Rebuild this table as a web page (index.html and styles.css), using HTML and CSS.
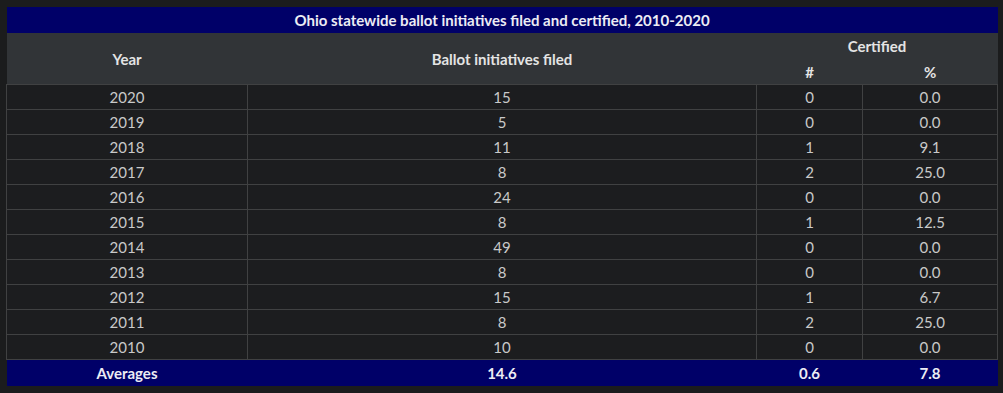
FILE: index.html
```html
<!DOCTYPE html>
<html>
<head>
<meta charset="utf-8">
<link rel="stylesheet" href="styles.css">
</head>
<body>
<div class="wrap">
<table class="data">
  <colgroup>
    <col class="c-year"><col class="c-filed"><col class="c-num"><col class="c-pct">
  </colgroup>
  <thead>
    <tr class="title-row"><th colspan="4">Ohio statewide ballot initiatives filed and certified, 2010-2020</th></tr>
    <tr class="head-row">
      <th rowspan="2">Year</th>
      <th rowspan="2">Ballot initiatives filed</th>
      <th colspan="2">Certified</th>
    </tr>
    <tr class="head-row sub"><th>#</th><th>%</th></tr>
  </thead>
  <tbody>
    <tr><td>2020</td><td>15</td><td>0</td><td>0.0</td></tr>
    <tr><td>2019</td><td>5</td><td>0</td><td>0.0</td></tr>
    <tr><td>2018</td><td>11</td><td>1</td><td>9.1</td></tr>
    <tr><td>2017</td><td>8</td><td>2</td><td>25.0</td></tr>
    <tr><td>2016</td><td>24</td><td>0</td><td>0.0</td></tr>
    <tr><td>2015</td><td>8</td><td>1</td><td>12.5</td></tr>
    <tr><td>2014</td><td>49</td><td>0</td><td>0.0</td></tr>
    <tr><td>2013</td><td>8</td><td>0</td><td>0.0</td></tr>
    <tr><td>2012</td><td>15</td><td>1</td><td>6.7</td></tr>
    <tr><td>2011</td><td>8</td><td>2</td><td>25.0</td></tr>
    <tr><td>2010</td><td>10</td><td>0</td><td>0.0</td></tr>
  </tbody>
  <tfoot>
    <tr class="avg-row"><td>Averages</td><td>14.6</td><td>0.6</td><td>7.8</td></tr>
  </tfoot>
</table>
</div>
</body>
</html>
```
FILE: styles.css
```css
html, body {
  margin: 0;
  padding: 0;
  background: #1b1c1d;
}
.wrap {
  padding: 7px 6px;
}
.data {
  width: 991px;
  border-collapse: collapse;
  table-layout: fixed;
  font-family: Lato, "Liberation Sans", sans-serif;
  text-align: center;
}
.c-year { width: 241px; }
.c-filed { width: 509px; }
.c-num { width: 106px; }
.c-pct { width: 135px; }
.title-row th {
  background: #000068;
  color: #ececf4;
  font-size: 15px;
  font-weight: 700;
  height: 26px;
  padding: 0;
}
.head-row th {
  background: #313437;
  color: #e4e4e4;
  font-size: 15px;
  font-weight: 700;
  height: 26px;
  padding: 0;
}
.head-row.sub th {
  height: 25px;
}
tbody td {
  background: #1c1d1f;
  color: #c9c9c9;
  font-size: 15px;
  height: 24px;
  padding: 0;
  border: 1px solid #404142;
}
.avg-row td {
  background: #000068;
  color: #ececf4;
  font-size: 15px;
  font-weight: 700;
  height: 26px;
  padding: 0;
}
```
